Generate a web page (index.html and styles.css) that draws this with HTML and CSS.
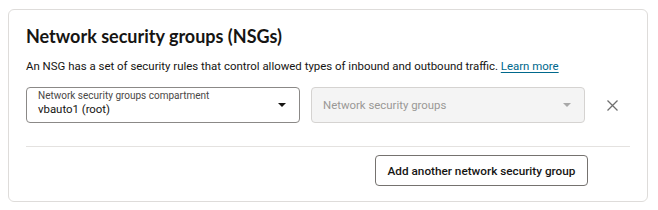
FILE: index.html
```html
<!DOCTYPE html>
<html>
<head>
<meta charset="utf-8">
<link rel="stylesheet" href="styles.css">
</head>
<body>
<section class="card">
  <h2 class="title">Network security groups (NSGs)</h2>
  <p class="desc">An NSG has a set of security rules that control allowed types of inbound and outbound traffic. <a class="link" href="#">Learn more</a></p>
  <div class="row">
    <div class="select">
      <div class="select-text stacked">
        <span class="select-label">Network security groups compartment</span>
        <span class="select-value">vbauto1 (root)</span>
      </div>
      <svg class="caret" width="8" height="4" viewBox="0 0 8 4"><path d="M0 0H8L4 4Z" fill="#161513"/></svg>
    </div>
    <div class="select disabled">
      <div class="select-text">
        <span class="select-placeholder">Network security groups</span>
      </div>
      <svg class="caret" width="8" height="4" viewBox="0 0 8 4"><path d="M0 0H8L4 4Z" fill="#a8a8a8"/></svg>
    </div>
    <button class="remove" aria-label="Remove">
      <svg width="11" height="11" viewBox="0 0 11 11"><path d="M0.5 0.5L10.5 10.5M10.5 0.5L0.5 10.5" stroke="#6f6f6f" stroke-width="1.3"/></svg>
    </button>
  </div>
  <hr class="divider">
  <div class="footer">
    <button class="btn">Add another network security group</button>
  </div>
</section>
</body>
</html>
```

FILE: styles.css
```css
html, body {
  margin: 0;
  padding: 0;
  background: #ffffff;
}
body {
  font-family: "Roboto", "Noto Sans", sans-serif;
  color: #161513;
}
.card {
  box-sizing: border-box;
  margin: 9px 0 0 8px;
  width: 640px;
  height: 193px;
  border: 1px solid #dedcda;
  border-radius: 6px;
  padding: 14px 17px 0 17px;
}
.title {
  margin: 0;
  font-family: "Lato", "Noto Sans", sans-serif;
  font-size: 18px;
  line-height: 24px;
  font-weight: 700;
}
.desc {
  margin: 9px 0 0 0;
  font-size: 11.45px;
  line-height: 18px;
}
.link {
  color: #00688c;
  text-decoration: underline;
  text-underline-offset: 2px;
}
.row {
  display: flex;
  align-items: center;
  margin-top: 12px;
  gap: 11px;
}
.select {
  box-sizing: border-box;
  width: 274px;
  height: 36px;
  border: 1px solid #8b8987;
  border-radius: 4px;
  display: flex;
  align-items: center;
  padding: 0 13px 0 11px;
}
.select.disabled {
  background: #f4f4f4;
  border-color: #d5d3d1;
}
.select-text {
  flex: 1;
  display: flex;
  flex-direction: column;
}
.select-text.stacked {
  padding-bottom: 4px;
}
.select-label {
  font-size: 10px;
  line-height: 13px;
  color: #4a4846;
}
.select-value {
  font-size: 11.4px;
  line-height: 15px;
}
.select-placeholder {
  font-size: 11.4px;
  line-height: 16px;
  color: #9a9896;
}
.remove {
  border: 0;
  background: none;
  padding: 0;
  margin-left: 11px;
  width: 11px;
  height: 11px;
  display: flex;
}
.divider {
  border: 0;
  border-top: 1px solid #e4e2e0;
  margin: 23px 0 0 0;
}
.footer {
  display: flex;
  justify-content: flex-end;
  padding-right: 42px;
  margin-top: 8px;
}
.btn {
  box-sizing: border-box;
  width: 213px;
  height: 31px;
  border: 1px solid #75726f;
  border-radius: 4px;
  background: #ffffff;
  font-family: "Roboto", "Noto Sans", sans-serif;
  font-size: 11.75px;
  font-weight: 500;
  color: #161513;
  padding: 0;
}
```
